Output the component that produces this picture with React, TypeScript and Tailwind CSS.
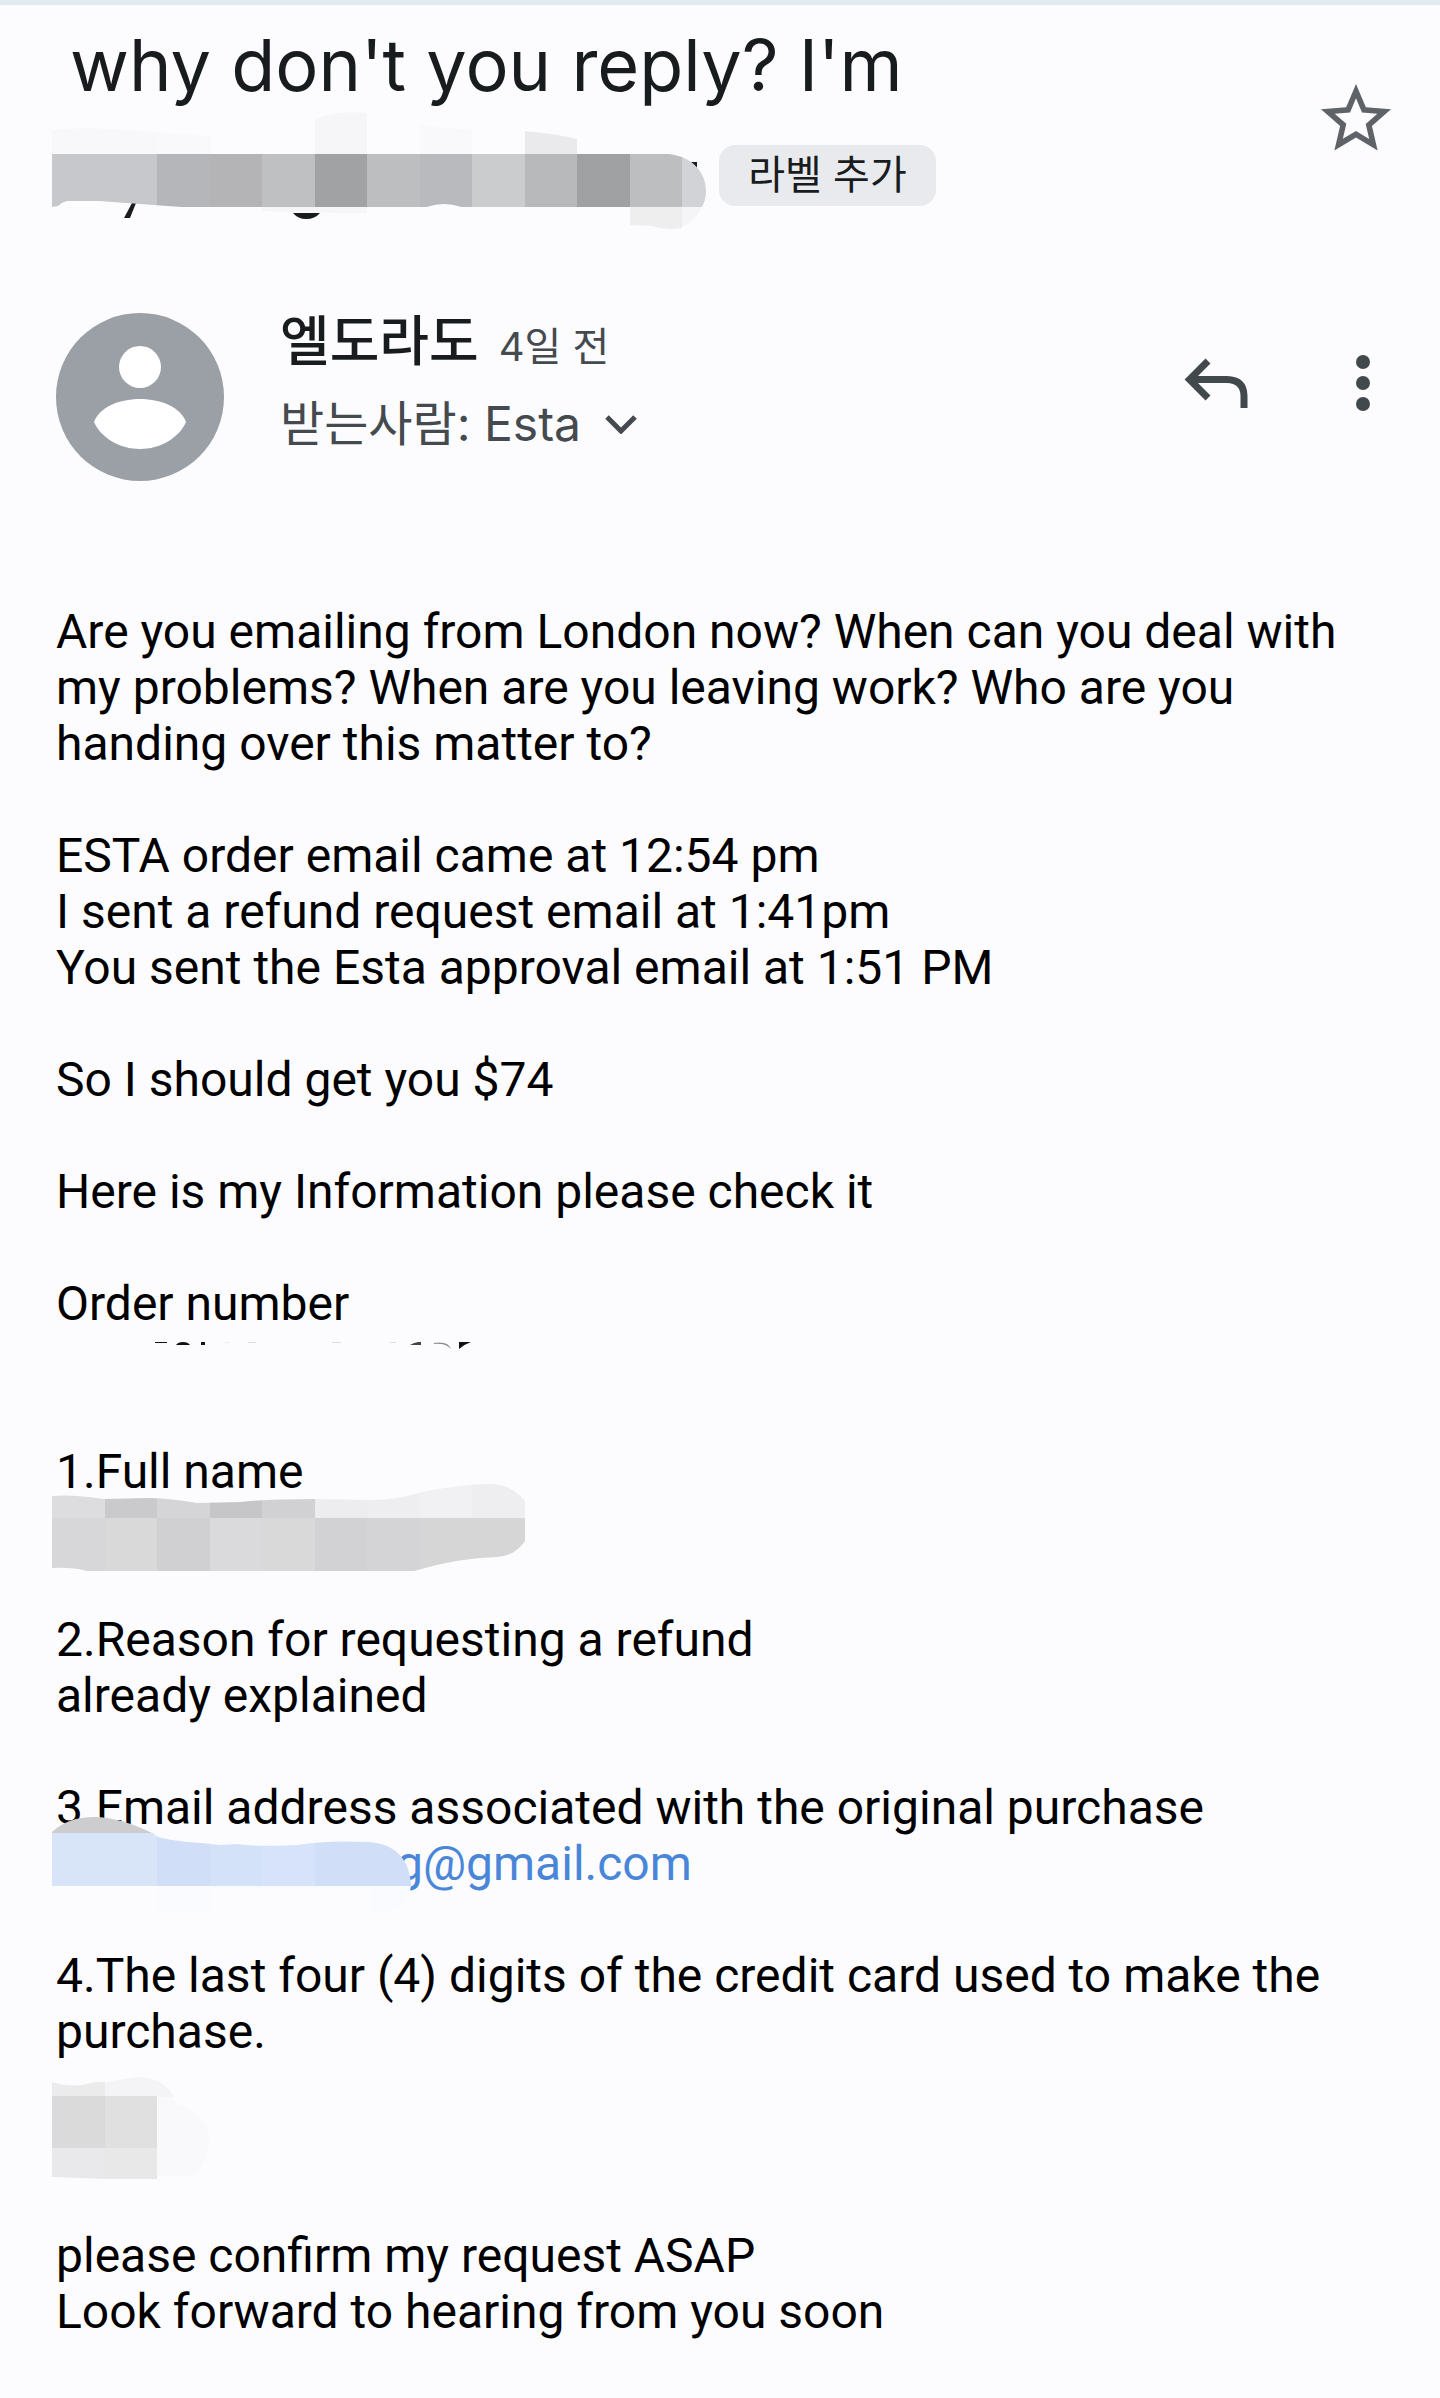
import type { ReactNode } from 'react';

interface Cell {
  x: number;
  fill: string;
}

const subjectCells: Cell[] = [
  { x: 0, fill: '#c7c8cb' },
  { x: 53, fill: '#c7c8cb' },
  { x: 105, fill: '#b5b6ba' },
  { x: 158, fill: '#b4b4b6' },
  { x: 210, fill: '#bfc0c2' },
  { x: 263, fill: '#a1a2a4' },
  { x: 315, fill: '#bdbec0' },
  { x: 368, fill: '#b9babe' },
  { x: 420, fill: '#cbccce' },
  { x: 473, fill: '#b8b9bb' },
  { x: 525, fill: '#a0a1a2' },
  { x: 578, fill: '#bdbec0' },
  { x: 630, fill: '#d2d3d7' },
];

const nameTopCells: Cell[] = [
  { x: 0, fill: '#dddddf' },
  { x: 53, fill: '#cacacc' },
  { x: 105, fill: '#d5d5d7' },
  { x: 158, fill: '#c6c6c8' },
  { x: 210, fill: '#d1d1d3' },
  { x: 263, fill: '#ededef' },
  { x: 315, fill: '#eeeef0' },
  { x: 368, fill: '#f1f1f3' },
  { x: 420, fill: '#eeeef0' },
];

const nameCells: Cell[] = [
  { x: 0, fill: '#d7d7d9' },
  { x: 53, fill: '#d9d9d9' },
  { x: 105, fill: '#d0d0d2' },
  { x: 158, fill: '#dadadc' },
  { x: 210, fill: '#d9d9da' },
  { x: 263, fill: '#d2d2d4' },
  { x: 315, fill: '#d4d4d6' },
  { x: 368, fill: '#d6d6d6' },
  { x: 420, fill: '#d6d6d6' },
];

const emailCells: Cell[] = [
  { x: 0, fill: '#d8e4f7' },
  { x: 53, fill: '#d8e4f7' },
  { x: 105, fill: '#d0dff7' },
  { x: 158, fill: '#d4e2f9' },
  { x: 210, fill: '#d6e3fb' },
  { x: 263, fill: '#d0dff7' },
  { x: 315, fill: '#d0def7' },
];

function Cells({ cells, y, height }: { cells: Cell[]; y: number; height: number }) {
  return (
    <>
      {cells.map((cell) => (
        <rect key={cell.x} x={cell.x} y={y} width="53" height={height} fill={cell.fill} />
      ))}
    </>
  );
}

function SubjectMosaic() {
  return (
    <svg className="h-[120px] w-[654px] shrink-0" viewBox="0 0 654 120" aria-hidden="true">
      <clipPath id="subject-clip">
        <path d="M0 44H616C640 46 654 62 654 81C654 88 652 93 650 97H409Q392 91 375 97H129L47 91H15Q10 92 6 96L0 97Z" />
      </clipPath>
      <path d="M80 93H84L78 108H72Z" fill="#191c1e" />
      <path d="M241 103H268Q263 109 254 109Q246 109 241 103Z" fill="#191c1e" />
      <path d="M638 52H645V58H638Z" fill="#191c1e" />
      <path d="M0 20Q30 17 53 19L105 22V44H0Z" fill="#f8f8fa" />
      <path d="M105 22L158 26V44H105Z" fill="#f9f9fb" />
      <path d="M263 9Q285 0 315 3V44H263Z" fill="#f6f6f8" />
      <path d="M368 14Q395 20 420 19V44H368Z" fill="#f9f9fb" />
      <path d="M473 21Q505 24 525 29V44H473Z" fill="#eaeaec" />
      <path d="M210 97H315V103Q260 103 210 101Z" fill="#f6f6f8" />
      <path d="M578 97H630V118Q615 121 600 116L578 115Z" fill="#eeeeef" />
      <path d="M630 97H650Q643 112 630 117Z" fill="#f5f5f7" />
      <g clipPath="url(#subject-clip)">
        <Cells cells={subjectCells} y={44} height={53} />
      </g>
    </svg>
  );
}

function NameMosaic() {
  return (
    <svg className="absolute top-10 -left-1 h-[90px] w-[473px]" viewBox="0 0 473 90" aria-hidden="true">
      <clipPath id="name-clip">
        <path d="M0 12Q20 10 52 15L96 14Q115 14 145 19L188 18Q215 15 263 15L320 16Q345 16 370 8Q410 0 440 0Q460 1 473 17V57Q463 72 445 73Q405 74 362 87H35Q20 83 0 84Z" />
      </clipPath>
      <g clipPath="url(#name-clip)">
        <Cells cells={nameTopCells} y={0} height={34} />
        <Cells cells={nameCells} y={34} height={53} />
      </g>
    </svg>
  );
}

function EmailMosaic() {
  return (
    <svg className="absolute top-9 -left-1 h-[100px] w-[360px]" viewBox="0 0 360 100" aria-hidden="true">
      <clipPath id="email-clip">
        <path d="M0 17H100L106 21Q120 25 150 27L168 29L185 28Q210 31 245 29Q275 24 315 26C340 27 358 40 359 70H0Z" />
      </clipPath>
      <path d="M0 70H359Q356 96 318 99V72H105V94L158 97V70Z" fill="#fafbfe" />
      <path d="M0 16Q16 1 42 1Q68 1 102 18H0Z" fill="#cdcdcf" />
      <g clipPath="url(#email-clip)">
        <Cells cells={emailCells} y={17} height={53} />
      </g>
    </svg>
  );
}

function CardMosaic() {
  return (
    <svg className="absolute top-4 -left-1 h-[105px] w-[160px]" viewBox="0 0 160 105" aria-hidden="true">
      <path d="M105 20H121L124 28C145 32 157 48 157 66Q154 90 140 100H105Z" fill="#f9f9fb" />
      <path d="M53 7Q70 3 85 1C105 0 118 12 122 21H53Z" fill="#f4f4f6" />
      <path d="M0 6Q18 12 35 8Q45 5 53 6V21H0Z" fill="#ebebec" />
      <path d="M0 20H53V72H0Z" fill="#dadada" />
      <path d="M53 20H105V72H53Z" fill="#e0e0e0" />
      <path d="M0 72H53V103L28 102L0 101Z" fill="#e9e9eb" />
      <path d="M53 72H105V103H53Z" fill="#e8e8e8" />
    </svg>
  );
}

/* top edges of the hidden order number */
function OrderRemnant() {
  return (
    <svg className="block h-14 w-[440px]" viewBox="0 0 440 56" fill="#111" aria-hidden="true">
      <path d="M99 10H111V11H99Z" />
      <path d="M120 13Q122 10 127 10Q132 10 134 13Z" />
      <path d="M145 10H149V13H145Z" />
      <path d="M166 12L172 10H174Z M192 10H200V11H192Z M276 10H285V11H276Z M334 10H340V11H334Z" fill="#ddd" />
      <path d="M354 13Q357 11 362 10H365V13Z" fill="#444" />
      <path d="M378 11Q392 9 395 17Q390 11 378 12Z" fill="#888" />
      <path d="M403 10H415Q409 12 403 17Z" />
    </svg>
  );
}

function Avatar() {
  return (
    <svg className="size-[168px] shrink-0" viewBox="0 0 168 168" aria-hidden="true">
      <circle cx="84" cy="84" r="84" fill="#9aa0a6" />
      <circle cx="84" cy="54" r="21" fill="#fff" />
      <path d="M84 86C62 86 43 95 38 109C45 125 64 136 84 136C104 136 123 125 130 109C125 95 106 86 84 86Z" fill="#fff" />
    </svg>
  );
}

function IconButton({ label, children }: { label: string; children: ReactNode }) {
  return (
    <button type="button" aria-label={label} className="size-[84px] shrink-0">
      {children}
    </button>
  );
}

export default function App() {
  return (
    <div className="min-h-screen border-t-[5px] border-[#e3ebf2] bg-[#fcfcff] font-['Roboto','Noto_Sans_CJK_KR',sans-serif] text-black">
      <header className="flex items-start justify-between pt-4 pr-[42px] pl-[52px] font-['Inter','Noto_Sans_CJK_KR',sans-serif]">
        <div>
          <h1 className="pl-[18px] text-7xl leading-[88px] text-[#191c1e]">why don't you reply? I'm</h1>
          <div className="mt-px flex items-center gap-[13px]">
            <SubjectMosaic />
            <button type="button" className="mt-2.5 h-[61px] w-[217px] rounded-2xl bg-[#e8eaed] text-[40px] leading-[56px] text-[#191c1e]">
              라벨 추가
            </button>
          </div>
        </div>
        <div className="pt-14">
          <IconButton label="Star">
            <svg viewBox="0 0 24 24" fill="#5f6368">
              <path d="M22 9.24l-7.19-.62L12 2 9.19 8.63 2 9.24l5.46 4.73L5.82 21 12 17.27 18.18 21l-1.63-7.03L22 9.24zM12 15.4l-3.76 2.27 1-4.28-3.32-2.88 4.38-.38L12 6.1l1.71 4.04 4.38.38-3.32 2.88 1 4.28L12 15.4z" />
            </svg>
          </IconButton>
        </div>
      </header>

      <section className="flex items-start pt-[83px] pr-[35px] pl-14 font-['Inter','Noto_Sans_CJK_KR',sans-serif]">
        <Avatar />
        <div className="min-w-0 flex-1 pt-px pl-14">
          <div className="flex h-14 items-baseline gap-5 leading-14">
            <h2 className="text-[54px] font-medium text-[#191c1e]">엘도라도</h2>
            <span className="text-[40px] text-[#444a4e]">4일 전</span>
          </div>
          <button type="button" className="mt-[22px] flex h-16 items-center gap-6 text-5xl leading-16 text-[#444a4e]">
            받는사람: Esta
            <svg className="h-5 w-8" viewBox="0 0 32 20" fill="none" stroke="#444a4e" strokeWidth="5">
              <path d="M2 3L16 17L30 3" />
            </svg>
          </button>
        </div>
        <div className="flex gap-[63px] pt-7">
          <IconButton label="Reply">
            <svg viewBox="0 0 84 84" fill="none" stroke="#42494d" strokeWidth="7">
              <path d="M34 20L15.500 38.500L34 57" />
              <path d="M16 38.500H53Q70 39 70 55V67" />
            </svg>
          </IconButton>
          <IconButton label="More">
            <svg viewBox="0 0 84 84" fill="#42494d">
              <circle cx="42" cy="21" r="7" />
              <circle cx="42" cy="42" r="7" />
              <circle cx="42" cy="63" r="7" />
            </svg>
          </IconButton>
        </div>
      </section>

      <main className="space-y-14 px-14 pt-[123px] pb-14 text-5xl leading-14">
        <p>
          Are you emailing from London now? When can you deal with my problems? When are you leaving work? Who are you
          handing over this matter to?
        </p>
        <p>
          ESTA order email came at 12:54 pm
          <br />
          I sent a refund request email at 1:41pm
          <br />
          You sent the Esta approval email at 1:51 PM
        </p>
        <p>So I should get you $74</p>
        <p>Here is my Information please check it</p>
        <div>
          <p>Order number</p>
          <OrderRemnant />
        </div>
        <div className="relative pb-14">
          <p>1.Full name</p>
          <NameMosaic />
        </div>
        <p>
          2.Reason for requesting a refund
          <br />
          already explained
        </p>
        <div className="relative">
          <p>3.Email address associated with the original purchase</p>
          <a href="mailto:g@gmail.com" className="block pl-[340px] text-[#4a86d8]">
            g@gmail.com
          </a>
          <EmailMosaic />
        </div>
        <div>
          <p>4.The last four (4) digits of the credit card used to make the purchase.</p>
          <div className="relative h-28">
            <CardMosaic />
          </div>
        </div>
        <p>
          please confirm my request ASAP
          <br />
          Look forward to hearing from you soon
        </p>
      </main>
    </div>
  );
}
